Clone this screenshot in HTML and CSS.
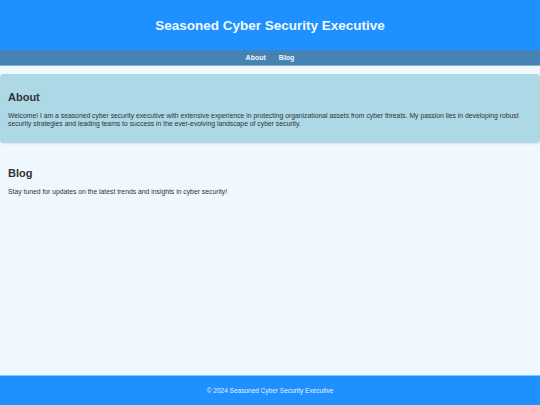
FILE: index.html
```html
<!DOCTYPE html>
<html lang="en">
<head>
<meta charset="utf-8">
<title>Seasoned Cyber Security Executive</title>
<link rel="stylesheet" href="styles.css">
</head>
<body>
<div class="page">
  <header class="site-header">
    <h1 class="site-title">Seasoned Cyber Security Executive</h1>
  </header>
  <nav class="site-nav">
    <a href="#about" class="nav-link">About</a>
    <a href="#blog" class="nav-link">Blog</a>
  </nav>
  <main class="content">
    <section id="about" class="section section-card">
      <h2 class="section-title">About</h2>
      <p class="section-text">Welcome! I am a seasoned cyber security executive with extensive experience in protecting organizational assets from cyber threats. My passion lies in developing robust security strategies and leading teams to success in the ever-evolving landscape of cyber security.</p>
    </section>
    <section id="blog" class="section">
      <h2 class="section-title">Blog</h2>
      <p class="section-text">Stay tuned for updates on the latest trends and insights in cyber security!</p>
    </section>
  </main>
  <footer class="site-footer">
    <p class="footer-text">&copy; 2024 Seasoned Cyber Security Executive</p>
  </footer>
</div>
</body>
</html>
```
FILE: styles.css
```css
* { box-sizing: border-box; }
html, body { margin: 0; padding: 0; height: 100%; }
body {
  font-family: "Liberation Sans", Arial, sans-serif;
  background: #F0F8FF;
  color: #333;
}
.page {
  min-height: 100%;
  display: flex;
  flex-direction: column;
}
.site-header {
  background: #1E90FF;
  height: 50px;
  display: flex;
  align-items: center;
  justify-content: center;
}
.site-title {
  margin: 0;
  color: #F0F8FF;
  font-size: 13.5px;
  font-weight: bold;
}
.site-nav {
  background: #4682B4;
  height: 16px;
  border-bottom: 1px solid #87AFD2;
  display: flex;
  justify-content: center;
  align-items: center;
  gap: 13px;
}
.nav-link {
  color: #F0F8FF;
  text-decoration: none;
  font-size: 7px;
  font-weight: bold;
}
.content {
  flex: 1;
  padding-top: 8px;
}
.section {
  padding: 8px;
  margin-bottom: 7px;
}
.section-card {
  background: #ADD8E6;
  border-radius: 4px;
  box-shadow: 0 1px 2px rgba(0,0,0,0.1);
}
.section-title {
  margin: 9px 0 9px;
  font-size: 11px;
  font-weight: bold;
}
.section-text {
  margin: 0 0 7px;
  font-size: 6.8px;
  line-height: 8px;
}
.site-footer {
  background: #1E90FF;
  border-top: 1px solid #87C3FF;
  height: 30px;
  display: flex;
  align-items: center;
  justify-content: center;
}
.footer-text {
  margin: 0;
  color: #E6F2FF;
  font-size: 6.5px;
}
```
